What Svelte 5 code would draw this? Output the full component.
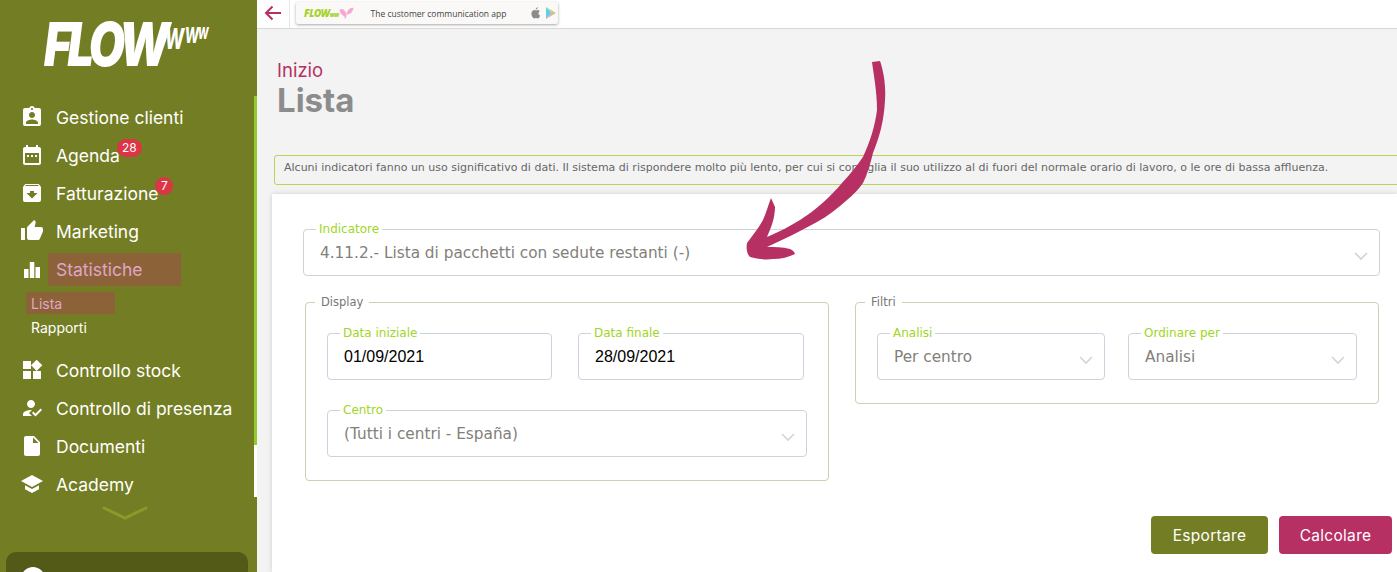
<script>
  const nav = [
    { label: 'Gestione clienti', icon: 'M19 3h-4.180C14.400 1.840 13.300 1 12 1c-1.300 0-2.400.84-2.820 2H5c-1.100 0-2 .9-2 2v14c0 1.100.9 2 2 2h14c1.100 0 2-.9 2-2V5c0-1.100-.9-2-2-2zm-7 0c.55 0 1 .45 1 1s-.45 1-1 1-1-.45-1-1 .45-1 1-1zm0 4c1.660 0 3 1.340 3 3s-1.340 3-3 3-3-1.340-3-3 1.340-3 3-3zm6 12H6v-1.400c0-2 4-3.100 6-3.100s6 1.100 6 3.100V19z' },
    { label: 'Agenda', badge: '28', icon: 'M19 4h-1V2h-2v2H8V2H6v2H5c-1.100 0-2 .9-2 2v14c0 1.100.9 2 2 2h14c1.100 0 2-.9 2-2V6c0-1.100-.9-2-2-2zm0 16H5V10h14v10zM7 12h2v2H7zM11 12h2v2h-2zM15 12h2v2h-2z' },
    { label: 'Fatturazione', badge: '7', icon: 'M20.540 5.230l-1.390-1.680C18.880 3.210 18.470 3 18 3H6c-.47 0-.88.21-1.160.55L3.460 5.230C3.170 5.570 3 6.020 3 6.500V19c0 1.100.9 2 2 2h14c1.100 0 2-.9 2-2V6.500c0-.48-.17-.93-.46-1.270zM12 17.500L6.500 12H10v-2h4v2h3.500L12 17.500zM5.120 5l.81-1h12l.94 1H5.120z' },
    { label: 'Marketing', icon: 'M1 21h4V9H1v12zm22-11c0-1.100-.9-2-2-2h-6.310l.95-4.570.03-.32c0-.41-.17-.79-.44-1.060L14.170 1 7.590 7.590C7.220 7.950 7 8.450 7 9v10c0 1.100.9 2 2 2h9c.83 0 1.540-.5 1.840-1.220l3.020-7.050c.09-.23.14-.47.14-.73v-2z' },
    { label: 'Statistiche', active: true, children: ['Lista', 'Rapporti'], icon: 'M4 12h4.500v9H4zM9.800 5h4.500v16H9.800zM15.500 10H20v11h-4.500z' },
    { label: 'Controllo stock', icon: 'M13 13v8h8v-8h-8zM3 21h8v-8H3v8zM3 3v8h8V3H3zm13.660-1.310L11 7.340 16.660 13l5.660-5.660-5.660-5.650z' },
    { label: 'Controllo di presenza', icon: 'M9 17l3-2.940c-.39-.04-.68-.06-1-.06-2.670 0-8 1.340-8 4v2h9l-3-3zm2-5c2.210 0 4-1.790 4-4s-1.790-4-4-4-4 1.790-4 4 1.790 4 4 4m4.470 8.500L12 17l1.400-1.410 2.070 2.080 5.130-5.170 1.400 1.410z' },
    { label: 'Documenti', icon: 'M6 2c-1.100 0-1.990.9-1.990 2L4 20c0 1.100.89 2 1.990 2H18c1.100 0 2-.9 2-2V8l-6-6H6zm7 7V3.500L18.500 9H13z' },
    { label: 'Academy', icon: 'M5 13.180v4L12 21l7-3.820v-4L12 17l-7-3.820zM12 3L1 9l11 6 11-6-11-6z' }
  ];
</script>

{#snippet selectField(label, value, cls)}
  <fieldset class="field {cls}">
    <legend>{label}</legend>
    <span class="value">{value}</span>
    <svg class="caret" width="14" height="8" viewBox="0 0 14 8"><path d="M1 1l6 6 6-6" fill="none" stroke="#d3d3d3" stroke-width="1.6"/></svg>
  </fieldset>
{/snippet}

{#snippet dateField(label, value)}
  <fieldset class="field">
    <legend>{label}</legend>
    <span class="date">{value}</span>
  </fieldset>
{/snippet}

<div class="app">
  <aside class="sidebar">
    <div class="logo"><span class="flow">FLOW</span><span class="w w1">w</span><span class="w w2">w</span><span class="w w3">w</span></div>
    <nav>
      {#each nav as item}
        <div class="row">
          <svg class="icon" width="24" height="24" viewBox="0 0 24 24"><path d={item.icon} fill="#fff"/></svg>
          <span class="label" class:active={item.active}>
            {item.label}
            {#if item.badge}<span class="badge">{item.badge}</span>{/if}
          </span>
        </div>
        {#if item.children}
          <div class="sub">
            {#each item.children as child, i}
              <div class="subrow" class:active={i === 0}>{child}</div>
            {/each}
          </div>
        {/if}
      {/each}
    </nav>
    <svg class="more" width="46" height="16" viewBox="0 0 46 16"><path d="M2 2l21 10L44 2" fill="none" stroke="#8a9a2b" stroke-width="3" stroke-linecap="round"/></svg>
    <div class="userbox">
      <span class="avatar"></span>
      <span class="username">Utente</span>
    </div>
    <div class="scroll"><span class="thumb"></span><span class="rest"></span></div>
  </aside>

  <main>
    <header class="topbar">
      <div class="back">
        <svg width="18" height="16" viewBox="0 0 18 16"><path d="M17 8H2M8.500 1.500L2 8l6.500 6.500" fill="none" stroke="#b73064" stroke-width="2"/></svg>
      </div>
      <div class="banner">
        <span class="b-logo">FLOW<small>ww</small></span>
        <svg class="butterfly" width="15" height="12" viewBox="0 0 14 12"><path d="M7 7C5 2 2 1 0 3c1 4 3 6 5 6L5 12c2-1 2-3 2-5zM7 7c1-4 4-7 7-6-1 4-3 7-7 6z" fill="#f7a8cf"/></svg>
        <span class="b-text">The customer communication app</span>
        <svg class="b-icon" width="10" height="12" viewBox="0 0 24 28"><path d="M18 15c0-3 2-4 3-5-1-2-3-3-5-3s-3 1-4 1-2-1-4-1c-3 0-7 3-7 8 0 6 4 12 7 12 2 0 2-1 4-1s2 1 4 1c3 0 5-4 6-7-2-1-4-2-4-5zM15 4c1-1 2-3 2-4-2 0-3 1-4 2s-2 3-2 4c2 0 3-1 4-2z" fill="#8b8b8b"/></svg>
        <svg class="b-icon" width="10" height="12" viewBox="0 0 10 12"><path d="M0 0l5.500 6L0 12z" fill="#5fd0e8"/><path d="M0 0l10 6-4.500 0z" fill="#a6dc8a"/><path d="M0 12l10-6-4.500 0z" fill="#f5a6a0"/></svg>
      </div>
    </header>

    <section class="content">
      <div class="crumb">Inizio</div>
      <h1>Lista</h1>
      <div class="notice">Alcuni indicatori fanno un uso significativo di dati. Il sistema di rispondere molto più lento, per cui si consiglia il suo utilizzo al di fuori del normale orario di lavoro, o le ore di bassa affluenza.</div>

      <div class="card">
        {@render selectField('Indicatore', '4.11.2.- Lista di pacchetti con sedute restanti (-)', 'wide')}

        <div class="groups">
          <fieldset class="group display">
            <legend>Display</legend>
            <div class="dates">
              {@render dateField('Data iniziale', '01/09/2021')}
              {@render dateField('Data finale', '28/09/2021')}
            </div>
            {@render selectField('Centro', '(Tutti i centri - España)', 'centro')}
          </fieldset>
          <fieldset class="group filters">
            <legend>Filtri</legend>
            <div class="filter-row">
              {@render selectField('Analisi', 'Per centro', '')}
              {@render selectField('Ordinare per', 'Analisi', '')}
            </div>
          </fieldset>
        </div>

        <div class="actions">
          <button class="export">Esportare</button>
          <button class="calc">Calcolare</button>
        </div>
      </div>
    </section>
  </main>

  <svg class="arrow" width="160" height="210" viewBox="740 55 160 210">
    <path d="M872 62L880 61C884 72 886 88 885 100C884 122 879 138 873 153C870 165 867 175 863 183C858 190 853 195 847 200C838 208 828 216 817 222C801 231 784 239 767 247C775 247 782 247 790 249C792 250 794 251 795 254C789 257 781 259 773 259C765 260 757 259 750 257C747 254 746 249 747 243C752 236 758 229 763 220C766 213 768 206 771 198L775 207C775 218 771 228 767 237C779 232 790 226 800 220C816 210 830 197 842 183C850 174 857 166 863 157C870 142 875 126 877 110C877 100 876 91 875 83C874 76 873 69 872 62Z" fill="#b73064"/>
  </svg>
</div>

<style>
  :global(body) {
    margin: 0;
    overflow: hidden;
    background: #f3f3f3;
  }
  .app {
    display: flex;
    height: 572px;
    width: 1397px;
    overflow: hidden;
    position: relative;
    font-family: "DejaVu Sans", sans-serif;
  }
  .sidebar {
    width: 257px;
    flex-shrink: 0;
    height: 572px;
    background: #737d23;
    position: relative;
    overflow: hidden;
    font-family: Inter, "Open Sans", sans-serif;
    box-sizing: border-box;
    padding-top: 19px;
  }
  .logo {
    height: 79px;
    padding-left: 44px;
    color: #fff;
    font-style: italic;
    font-weight: 900;
    white-space: nowrap;
    display: flex;
    align-items: flex-start;
  }
  .flow {
    display: inline-block;
    width: 121px;
    font-size: 60px;
    line-height: 60px;
    letter-spacing: -5px;
    margin-top: -5px;
    transform: scaleX(0.78);
    transform-origin: left top;
  }
  .w {
    display: inline-block;
    transform: scaleX(0.6);
    transform-origin: left top;
    font-weight: 700;
  }
  .w1 { width: 20px; font-size: 38px; line-height: 38px; margin-top: -3px; }
  .w2 { width: 13px; font-size: 28px; line-height: 28px; margin-top: 0; }
  .w3 { width: 13px; font-size: 21px; line-height: 21px; margin-top: 2px; }
  .row {
    height: 38px;
    display: flex;
    align-items: center;
    padding-left: 20px;
    color: #fff;
    font-size: 17.500px;
  }
  .icon {
    margin-right: 12px;
    flex-shrink: 0;
  }
  .label {
    position: relative;
    line-height: 33px;
    white-space: nowrap;
  }
  .label.active {
    color: #e0a6c8;
    background: #8c6239;
    width: 125px;
    padding-left: 8px;
    margin-left: -8px;
  }
  .badge {
    position: absolute;
    left: 100%;
    top: 0;
    margin-left: -3px;
    min-width: 8px;
    padding: 0 5px;
    height: 18px;
    line-height: 18px;
    border-radius: 9px;
    background: #dc3545;
    color: #fff;
    font-size: 12px;
    text-align: center;
  }
  .sub {
    padding: 4px 0 11px 26px;
    font-size: 14px;
    color: #fff;
  }
  .subrow {
    height: 22px;
    line-height: 24px;
    width: 84px;
    padding-left: 5px;
    margin-bottom: 2px;
  }
  .subrow.active {
    background: #8c6239;
    color: #e0a6c8;
  }
  .more {
    display: block;
    margin: 3px 0 0 102px;
  }
  .userbox {
    position: absolute;
    left: 6px;
    top: 552px;
    width: 242px;
    height: 60px;
    background: #535a17;
    border-radius: 10px;
    color: #fff;
    font-size: 15px;
    display: flex;
    gap: 16px;
    padding: 15px 0 0 15px;
    box-sizing: border-box;
  }
  .avatar {
    width: 24px;
    height: 24px;
    border-radius: 50%;
    background: #fff;
  }
  .username { margin-top: 2px; }
  .scroll {
    position: absolute;
    right: 0;
    top: 96px;
    width: 3px;
    display: flex;
    flex-direction: column;
  }
  .thumb { height: 349px; background: #93cb2d; }
  .rest { height: 52px; background: #fff; }

  main {
    flex: 1;
    min-width: 0;
    display: flex;
    flex-direction: column;
    background: #f3f3f3;
  }
  .topbar {
    height: 28px;
    background: #fff;
    border-bottom: 1px solid #d8d8d8;
    display: flex;
    align-items: stretch;
    flex-shrink: 0;
  }
  .back {
    width: 33px;
    box-sizing: border-box;
    border-right: 1px solid #e6e6e6;
    display: flex;
    align-items: center;
    padding: 0 0 3px 7px;
  }
  .banner {
    margin: 2px 0 4px 6px;
    width: 262px;
    box-sizing: border-box;
    background: #fbf9f8;
    border-radius: 2px;
    box-shadow: 0 1px 3px rgba(0, 0, 0, 0.35);
    display: flex;
    align-items: center;
    font-family: "Open Sans", sans-serif;
    font-size: 8.500px;
    color: #444;
    padding-left: 8px;
  }
  .b-logo {
    color: #a6d22c;
    font-weight: 800;
    font-style: italic;
    font-size: 10px;
    letter-spacing: -0.5px;
  }
  .b-logo small { font-size: 6px; }
  .butterfly { margin-left: 0; }
  .b-text { margin-left: 17px; width: 155px; white-space: nowrap; }
  .b-icon { margin-left: 5px; }

  .content {
    flex: 1;
    min-height: 0;
    display: flex;
    flex-direction: column;
  }
  .crumb {
    font-family: Inter, sans-serif;
    font-size: 18.500px;
    line-height: 20px;
    color: #b73064;
    margin: 31px 0 0 20px;
  }
  h1 {
    font-family: Inter, sans-serif;
    font-size: 33px;
    line-height: 36px;
    font-weight: 700;
    color: #8c8c8c;
    margin: 2px 0 0 20px;
  }
  .notice {
    margin: 37px -20px 0 17px;
    height: 30px;
    box-sizing: border-box;
    border: 1px solid #bcd259;
    border-radius: 3px;
    padding: 0 9px;
    line-height: 23px;
    font-size: 11px;
    color: #666;
    white-space: nowrap;
    overflow: hidden;
  }
  .card {
    margin: 9px 0 0 15px;
    flex: 1;
    background: #fff;
    box-shadow: 0 0 5px rgba(0, 0, 0, 0.15);
    padding: 28px 17px 0 31px;
    box-sizing: border-box;
  }
  fieldset {
    margin: 0;
    min-width: 0;
    box-sizing: border-box;
    position: relative;
  }
  .field {
    border: 1px solid #ced2de;
    border-radius: 4px;
    padding: 0 16px;
    height: 54px;
    flex: 1;
  }
  .field > legend {
    padding: 0 3px;
    margin-left: -4px;
    font-size: 12px;
    line-height: 14px;
    color: #a0d626;
  }
  .value {
    display: block;
    font-size: 15.300px;
    line-height: 35px;
    color: #82807a;
    white-space: nowrap;
  }
  .date {
    display: block;
    font-family: "Liberation Sans", sans-serif;
    font-size: 16px;
    line-height: 34px;
    color: #000;
  }
  .caret {
    position: absolute;
    right: 11px;
    top: 16px;
  }
  .wide {
    height: 54px;
    border-color: #d2d2d2;
  }
  .groups {
    display: grid;
    grid-template-columns: 524px 524px;
    gap: 26px;
    margin: 19px 0 0 2px;
    align-items: start;
  }
  .group {
    border: 1px solid #cfcfb3;
    border-radius: 4px;
    padding: 17px 21px 0;
  }
  .group > legend {
    padding: 0 6px;
    margin-left: -12px;
    font-size: 11.500px;
    line-height: 14px;
    color: #777;
  }
  .display { height: 186px; }
  .filters { height: 109px; }
  .dates {
    display: grid;
    grid-template-columns: 225px 226px;
    gap: 26px;
  }
  .centro {
    width: 480px;
    margin-top: 23px;
  }
  .filter-row {
    display: grid;
    grid-template-columns: 228px 229px;
    gap: 23px;
  }
  .actions {
    display: flex;
    justify-content: flex-end;
    gap: 11px;
    margin: 35px -12px 0 0;
  }
  button {
    height: 38px;
    border: none;
    border-radius: 4px;
    color: #fff;
    font-family: Inter, sans-serif;
    font-size: 15.500px;
    letter-spacing: 0.3px;
  }
  .export { background: #737d23; width: 117px; }
  .calc { background: #b73064; width: 113px; }

  .arrow {
    position: absolute;
    left: 740px;
    top: 55px;
    pointer-events: none;
  }
</style>
